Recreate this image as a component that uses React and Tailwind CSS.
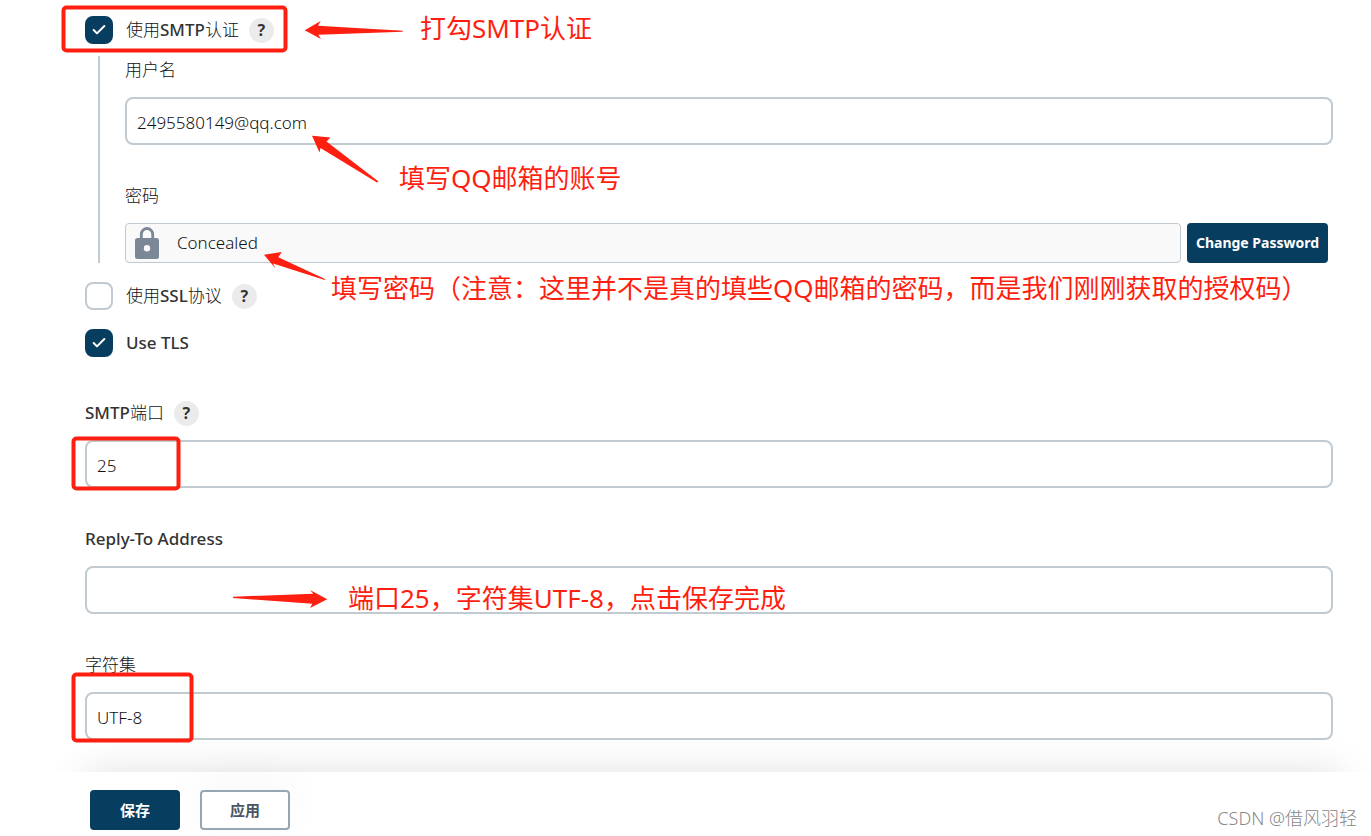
import React from "react";
import { Check } from "lucide-react";

const inputClass =
  "block h-12 w-full rounded-lg border-2 border-[#c0cad0] bg-white px-[10px] pt-[2px] text-[17px] font-light text-[#111]";

const HelpButton = ({ label }) => (
  <button
    type="button"
    aria-label={label}
    className="flex h-[25px] w-[25px] items-center justify-center rounded-full bg-[#ebebeb] text-base font-bold text-[#333]"
  >
    ?
  </button>
);

const CheckRow = ({ id, label, checked, help }) => (
  <div className="flex h-7 items-center">
    <span className="relative mr-[13px] h-7 w-7 shrink-0">
      <input
        id={id}
        type="checkbox"
        defaultChecked={checked}
        className="peer block h-7 w-7 appearance-none rounded-lg border-2 border-[#c0cad0] bg-white checked:border-[#073e60] checked:bg-[#073e60]"
      />
      <Check
        size={16}
        strokeWidth={3}
        className="pointer-events-none absolute top-[6px] left-[6px] hidden text-white peer-checked:block"
      />
    </span>
    <label htmlFor={id} className="mr-[10px] font-light text-[#111]">
      {label}
    </label>
    {help && <HelpButton label="帮助" />}
  </div>
);

const Field = ({ id, label, value, help }) => (
  <div>
    <div className="mb-[13px] flex h-7 items-center gap-[10px]">
      <label htmlFor={id} className="font-light text-[#111]">
        {label}
      </label>
      {help && <HelpButton label="帮助" />}
    </div>
    <input id={id} type="text" defaultValue={value} className={inputClass} />
  </div>
);

// latin part of a label is heavier than the chinese part
const Latin = ({ children }) => <span className="font-medium text-[#333]">{children}</span>;

const LockIcon = () => (
  <svg viewBox="0 0 24 32" className="h-8 w-6 shrink-0" fill="#7b8797">
    <path d="M6.3 12.5V7.2a5.700 5.700 0 0 1 11.400 0v5.3" fill="none" stroke="#7b8797" strokeWidth="2.8" />
    <path
      fillRule="evenodd"
      d="M2.5 11h19a2.5 2.5 0 0 1 2.5 2.5v16a2.5 2.5 0 0 1-2.5 2.5h-19a2.5 2.5 0 0 1-2.5-2.5v-16a2.5 2.5 0 0 1 2.5-2.5zm9.5 7a3.2 3.2 0 1 0 0 6.4 3.2 3.2 0 0 0 0-6.4z"
    />
  </svg>
);

// Red marks and notes drawn over the form
const Notes = () => (
  <div className="pointer-events-none absolute inset-0 text-[26px] leading-8 whitespace-nowrap text-[#ff1f10]">
    <svg className="absolute top-0 left-0 h-[836px] w-[440px]" fill="#ff1f10">
      <g fill="none" stroke="#ff1f10" strokeWidth="4">
        <rect x="63.5" y="7.5" width="222" height="43" rx="3" />
        <rect x="73.5" y="438.5" width="105" height="50" rx="3" />
        <rect x="73.5" y="674.5" width="118" height="66" rx="3" />
      </g>
      <path d="M304.7 30.3L320.7 21L318 25.7L402.7 30.8V31.7L318.3 34.7L321 39Z" />
      <path d="M312 135.7L330.5 137.5L326.5 141.5L378.5 181.5L377 182.5L320.5 148L319.5 152.5Z" />
      <path d="M264 254.7L281.7 252L278.3 257.3L325 279L324.7 280L273 263.5L275.5 268.5Z" />
      <path d="M327.3 599.3L310 590L313.3 593.7L233 596.7V598L312.3 603.7L310 608Z" />
    </svg>
    <p className="absolute top-[12px] left-[420px]">打勾SMTP认证</p>
    <p className="absolute top-[162px] left-[399px]">填写QQ邮箱的账号</p>
    <p className="absolute top-[272px] left-[331px]">
      填写密码（注意：这里并不是真的填些QQ邮箱的密码，而是我们刚刚获取的授权码）
    </p>
    <p className="absolute top-[582px] left-[348px]">端口25，字符集UTF-8，点击保存完成</p>
  </div>
);

const App = () => {
  return (
    <div className="relative overflow-hidden bg-white font-['Noto_Sans','Noto_Sans_CJK_SC',sans-serif] text-[17px] text-[#333]">
      <form className="pt-4" onSubmit={(e) => e.preventDefault()}>
        <div className="pr-[38px] pl-[85px]">
          <CheckRow id="smtp-auth" label={<>使用<Latin>SMTP</Latin>认证</>} checked help />

          <div className="mt-3 ml-[13px] border-l-2 border-[#c0cad0] pl-[25px]">
            <Field id="username" label="用户名" value="2495580149@qq.com" />
            <div className="mt-[37px] mb-[13px] flex h-7 items-center font-light text-[#111]">密码</div>
            <div className="mr-[5px] flex gap-[6px]">
              <div className="flex h-10 grow items-center gap-[18px] rounded border border-[#c0cad0] bg-[#f9f9f9] px-[9px]">
                <LockIcon />
                <span className="font-light text-[#111]">Concealed</span>
              </div>
              <button type="button" className="h-10 w-[141px] rounded bg-[#073e60] text-sm font-bold text-white">
                Change Password
              </button>
            </div>
          </div>

          <div className="mt-[19px] mb-[42px] flex flex-col gap-[19px]">
            <CheckRow id="ssl" label={<>使用<Latin>SSL</Latin>协议</>} help />
            <CheckRow id="tls" label={<Latin>Use TLS</Latin>} checked />
          </div>

          <div className="flex flex-col gap-[37px]">
            <Field id="port" label={<><Latin>SMTP</Latin>端口</>} value="25" help />
            <Field id="reply-to" label={<Latin>Reply-To Address</Latin>} value="" />
            <Field id="charset" label="字符集" value="UTF-8" />
          </div>
        </div>

        {/* soft shadow on top of the button bar */}
        <div className="h-8 overflow-hidden pr-[30px] pl-[85px]">
          <div className="mt-8 h-16 shadow-[0_0_40px_rgba(0,0,0,0.12)]" />
        </div>
        <div className="flex h-16 items-start justify-between bg-white pt-[18px] pr-[14px] pl-[90px]">
          <div className="flex gap-5 text-[15px] font-bold">
            <button type="submit" className="h-10 w-[90px] rounded bg-[#073e60] text-white">
              保存
            </button>
            <button
              type="button"
              className="h-10 w-[90px] rounded border-2 border-[#98a6b1] bg-white text-[#4b5563] shadow-[0_-8px_48px_rgba(0,0,0,0.04)]"
            >
              应用
            </button>
          </div>
          <span className="self-end pb-[6px] text-lg leading-6 font-light text-[#888]">CSDN @借风羽轻</span>
        </div>
      </form>
      <Notes />
    </div>
  );
};

export default App;
